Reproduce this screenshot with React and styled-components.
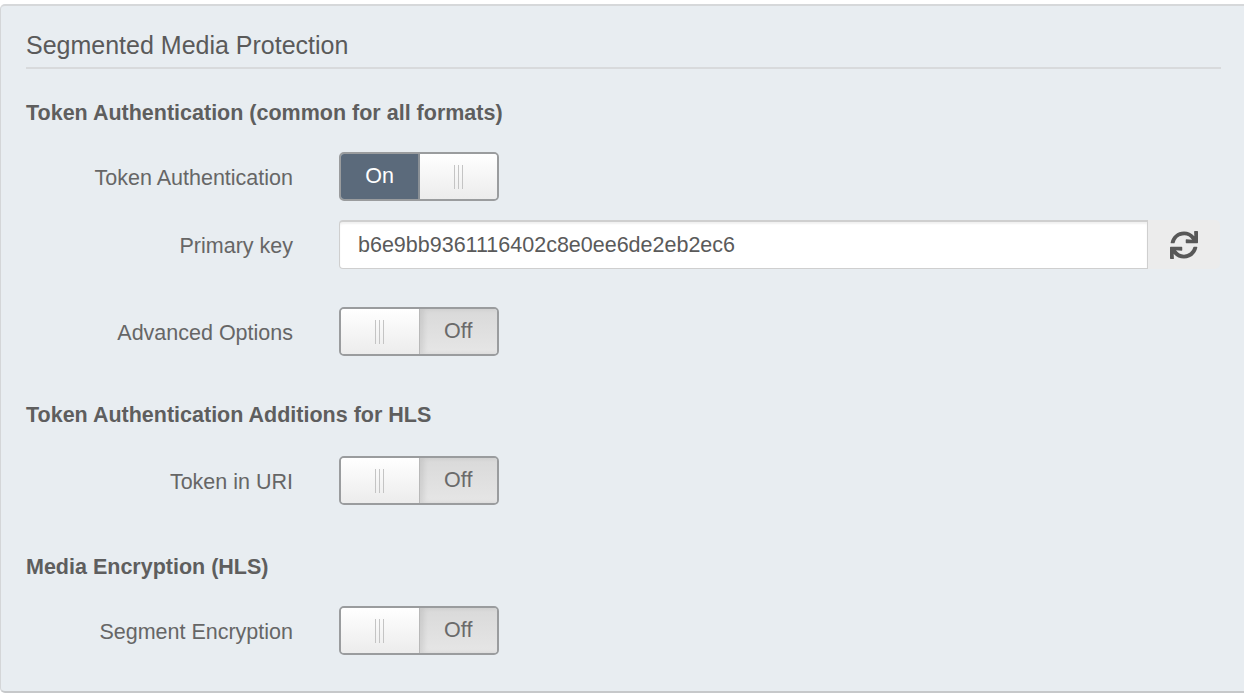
import React from "react";
import styled, { createGlobalStyle } from "styled-components";
import { FaSync } from "react-icons/fa";

const GlobalStyle = createGlobalStyle`
  body {
    margin: 0;
    background: #ffffff;
    font-family: "Liberation Sans", Arial, sans-serif;
    overflow: hidden;
  }
`;

const Toggle = ({ on }) => (
  <Switch>
    {on ? (
      <>
        <Half className="active-on">On</Half>
        <Half className="grip">
          <Grip />
        </Half>
      </>
    ) : (
      <>
        <Half className="grip">
          <Grip />
        </Half>
        <Half className="active-off">Off</Half>
      </>
    )}
  </Switch>
);

const App = () => {
  return (
    <>
      <GlobalStyle />
      <StyledWrapper>
        <h1 className="title">Segmented Media Protection</h1>

        <SectionHeading $top={32}>Token Authentication (common for all formats)</SectionHeading>

        <Row $top={27}>
          <Label>Token Authentication</Label>
          <Toggle on />
        </Row>

        <Row $top={19}>
          <Label>Primary key</Label>
          <KeyGroup>
            <KeyInput readOnly value="b6e9bb9361116402c8e0ee6de2eb2ec6" />
            <RefreshButton>
              <FaSync />
            </RefreshButton>
          </KeyGroup>
        </Row>

        <Row $top={38}>
          <Label>Advanced Options</Label>
          <Toggle />
        </Row>

        <SectionHeading $top={47}>Token Authentication Additions for HLS</SectionHeading>

        <Row $top={29}>
          <Label>Token in URI</Label>
          <Toggle />
        </Row>

        <SectionHeading $top={50}>Media Encryption (HLS)</SectionHeading>

        <Row $top={27}>
          <Label>Segment Encryption</Label>
          <Toggle />
        </Row>
      </StyledWrapper>
    </>
  );
};

export default App;

const StyledWrapper = styled.section`
  margin-top: 4px;
  width: 1260px;
  box-sizing: border-box;
  background-color: #e8edf1;
  border: 1px solid #d4d6d8;
  border-top: 2px solid #d6d8da;
  border-bottom: 2px solid #c6c8ca;
  border-radius: 5px;
  padding: 0 40px 36px 25px;
  color: #5c5c5c;

  .title {
    margin: 0;
    padding: 25px 0 8px;
    font-size: 25px;
    line-height: 28px;
    font-weight: normal;
    color: #5a5a5a;
    border-bottom: 2px solid #d8dadc;
    width: 1195px;
  }
`;

const SectionHeading = styled.h2`
  margin: ${(p) => p.$top}px 0 0;
  font-size: 21.5px;
  line-height: 24px;
  font-weight: bold;
  color: #5e5e5e;
`;

const Row = styled.div`
  display: flex;
  align-items: center;
  margin-top: ${(p) => p.$top}px;
`;

const Label = styled.label`
  width: 267px;
  flex-shrink: 0;
  margin-right: 46px;
  padding-top: 4px;
  text-align: right;
  font-size: 21.5px;
  color: #666666;
`;

const Switch = styled.div`
  display: flex;
  width: 160px;
  height: 49px;
  box-sizing: border-box;
  border: 2px solid #9a9c9e;
  border-radius: 5px;
  overflow: hidden;
`;

const Half = styled.div`
  flex: 1;
  display: flex;
  align-items: center;
  justify-content: center;
  font-size: 21.5px;

  &.active-on {
    background: #5b6a7b;
    color: #ffffff;
    border-right: 2px solid #8a9096;
  }

  &.grip {
    background: linear-gradient(#ffffff, #ececec);
  }

  &.active-off {
    background: linear-gradient(#d9d9d9, #e6e6e6);
    box-shadow: inset 4px 0 5px rgba(0, 0, 0, 0.08);
    border-left: 1px solid #b8b8b8;
    color: #6a6a6a;
  }
`;

const Grip = styled.span`
  width: 9px;
  height: 24px;
  background: repeating-linear-gradient(
    to right,
    #c4c4c4 0,
    #c4c4c4 1px,
    transparent 1px,
    transparent 4px
  );
`;

const KeyGroup = styled.div`
  display: flex;
  height: 49px;
`;

const KeyInput = styled.input`
  width: 809px;
  height: 49px;
  box-sizing: border-box;
  border: 1px solid #cfcfcf;
  border-top: 2px solid #cfcfcf;
  border-radius: 4px 0 0 4px;
  box-shadow: inset 0 2px 2px rgba(0, 0, 0, 0.06);
  padding: 0 18px;
  font-family: "Liberation Sans", Arial, sans-serif;
  font-size: 21.5px;
  color: #5a5a5a;
  background: #ffffff;
  outline: none;
`;

const RefreshButton = styled.button`
  width: 72px;
  height: 49px;
  border: none;
  border-radius: 0 5px 5px 0;
  background: #ececec;
  color: #585858;
  display: flex;
  align-items: center;
  justify-content: center;
  padding: 0;

  svg {
    width: 28px;
    height: 28px;
  }
`;
